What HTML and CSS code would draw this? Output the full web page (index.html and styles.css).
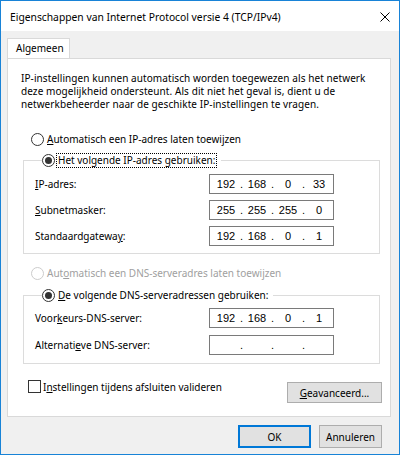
FILE: index.html
```html
<!DOCTYPE html>
<html lang="nl">
<head>
    <meta charset="UTF-8">
    <title>Eigenschappen van Internet Protocol versie 4 (TCP/IPv4)</title>
    <link rel="stylesheet" href="styles.css">
</head>
<body>
    <div class="window">
        <div class="titlebar">
            <span class="title">Eigenschappen van Internet Protocol versie 4 (TCP/IPv4)</span>
            <svg class="close" width="10" height="10" viewBox="0 0 10 10">
                <path d="M0.5 0.5 L9.5 9.5 M9.5 0.5 L0.5 9.5" stroke="#000" stroke-width="1" fill="none"/>
            </svg>
        </div>

        <div class="content">
            <div class="tabs">
                <div class="tab active">Algemeen</div>
            </div>
            <div class="panel">
                <p class="intro">
                    IP-instellingen kunnen automatisch worden toegewezen als het netwerk<br>
                    deze mogelijkheid ondersteunt. Als dit niet het geval is, dient u de<br>
                    netwerkbeheerder naar de geschikte IP-instellingen te vragen.
                </p>

                <div class="radio-row first">
                    <span class="radio"></span>
                    <span class="radio-text"><u>A</u>utomatisch een IP-adres laten toewijzen</span>
                </div>

                <fieldset class="group ip-group">
                    <legend>
                        <span class="radio checked"></span>
                        <span class="radio-text focus">Het volgende IP-adres gebruiken:</span>
                    </legend>
                    <div class="rows">
                        <span class="label"><u>I</u>P-adres:</span>
                        <div class="ipbox">
                            <span class="oct">192</span><span class="dot">.</span><span class="oct">168</span><span class="dot">.</span><span class="oct">0</span><span class="dot">.</span><span class="oct">33</span>
                        </div>
                        <span class="label"><u>S</u>ubnetmasker:</span>
                        <div class="ipbox">
                            <span class="oct">255</span><span class="dot">.</span><span class="oct">255</span><span class="dot">.</span><span class="oct">255</span><span class="dot">.</span><span class="oct">0</span>
                        </div>
                        <span class="label">Standaardgatewa<u>y</u>:</span>
                        <div class="ipbox">
                            <span class="oct">192</span><span class="dot">.</span><span class="oct">168</span><span class="dot">.</span><span class="oct">0</span><span class="dot">.</span><span class="oct">1</span>
                        </div>
                    </div>
                </fieldset>

                <div class="radio-row disabled">
                    <span class="radio"></span>
                    <span class="radio-text">Aut<u>o</u>matisch een DNS-serveradres laten toewijzen</span>
                </div>

                <fieldset class="group dns-group">
                    <legend>
                        <span class="radio checked"></span>
                        <span class="radio-text"><u>D</u>e volgende DNS-serveradressen gebruiken:</span>
                    </legend>
                    <div class="rows">
                        <span class="label">Voor<u>k</u>eurs-DNS-server:</span>
                        <div class="ipbox">
                            <span class="oct">192</span><span class="dot">.</span><span class="oct">168</span><span class="dot">.</span><span class="oct">0</span><span class="dot">.</span><span class="oct">1</span>
                        </div>
                        <span class="label">Alternati<u>e</u>ve DNS-server:</span>
                        <div class="ipbox">
                            <span class="oct"></span><span class="dot">.</span><span class="oct"></span><span class="dot">.</span><span class="oct"></span><span class="dot">.</span><span class="oct"></span>
                        </div>
                    </div>
                </fieldset>

                <div class="bottom-row">
                    <label class="check-row">
                        <span class="checkbox"></span>
                        <span>I<u>n</u>stellingen tijdens afsluiten valideren</span>
                    </label>
                    <button class="btn advanced"><u>G</u>eavanceerd...</button>
                </div>
            </div>

            <div class="dialog-buttons">
                <button class="btn ok">OK</button>
                <button class="btn cancel">Annuleren</button>
            </div>
        </div>
    </div>
</body>
</html>
```

FILE: styles.css
```css
body {
    margin: 0;
    font-family: "Segoe UI", "Noto Sans", sans-serif;
    font-size: 10px;
    color: #000;
    background-color: #f0f0f0;
}

.window {
    width: 400px;
    height: 455px;
    box-sizing: border-box;
    border: 1px solid #1883d7;
    background-color: #f0f0f0;
    overflow: hidden;
}

.titlebar {
    height: 30px;
    background-color: #fff;
    display: flex;
    align-items: center;
    justify-content: space-between;
    padding: 0 9px 0 9px;
}

.title {
    font-size: 10.3px;
    line-height: 30px;
    padding-top: 1px;
}

.close {
    display: block;
    margin-top: 1px;
}

.content {
    padding: 7px 0 0 6px;
}

.tabs {
    display: flex;
    height: 20px;
}

.tab {
    width: 63px;
    height: 20px;
    border: 1px solid #d9d9d9;
    border-bottom: none;
    background-color: #fff;
    padding-left: 8px;
    box-sizing: border-box;
    line-height: 19px;
    position: relative;
    z-index: 1;
}

.panel {
    width: 384px;
    height: 359px;
    box-sizing: border-box;
    border: 1px solid #d9d9d9;
    background-color: #fff;
}

.intro {
    margin: 13px 0 0 13px;
    line-height: 13px;
    white-space: nowrap;
    letter-spacing: 0.08px;
}

.radio-row {
    display: flex;
    align-items: center;
    height: 13px;
    margin: 13px 0 0 23px;
}

.radio-row.first {
    margin-top: 22px;
}

.radio {
    width: 13px;
    height: 13px;
    box-sizing: border-box;
    border: 1px solid #333;
    border-radius: 50%;
    background-color: #fff;
    display: flex;
    align-items: center;
    justify-content: center;
    flex: none;
}

.radio.checked::after {
    content: "";
    width: 7px;
    height: 7px;
    border-radius: 50%;
    background-color: #333;
}

.radio-text {
    margin-left: 3px;
    line-height: 13px;
    white-space: nowrap;
}

.radio-text.focus {
    margin-left: 2px;
    padding: 0 1px;
    outline: 1px dotted #000;
    outline-offset: 0;
}

.disabled .radio {
    border-color: #ccc;
}

.disabled .radio-text {
    color: #a0a0a0;
}

.group {
    margin: 7px 10px 0 15px;
    padding: 7px 0 7px 11px;
    border: 1px solid #dcdcdc;
    min-width: 0;
}

.group legend {
    display: flex;
    align-items: center;
    height: 14px;
    margin-left: 7px;
    padding: 0 5px 0 0;
}

.dns-group {
    margin-top: 8px;
    padding-top: 6px;
    padding-bottom: 8px;
}

.rows {
    display: grid;
    grid-template-columns: 174px 125px;
    row-gap: 6px;
    align-items: center;
}

.dns-group .rows {
    row-gap: 7px;
}

.label {
    line-height: 20px;
}

.ipbox {
    height: 20px;
    box-sizing: border-box;
    border: 1px solid #7a7a7a;
    background-color: #fff;
    display: flex;
    align-items: center;
    padding-left: 4px;
    font-family: "Liberation Sans", Arial, sans-serif;
    font-size: 11px;
}

.oct {
    width: 24px;
    text-align: center;
}

.dot {
    width: 7px;
    text-align: center;
}

.bottom-row {
    display: flex;
    justify-content: space-between;
    align-items: flex-start;
    margin: 16px 8px 0 20px;
}

.check-row {
    display: flex;
    align-items: center;
    height: 13px;
}

.checkbox {
    width: 13px;
    height: 13px;
    box-sizing: border-box;
    border: 1px solid #333;
    background-color: #fff;
    margin-right: 2px;
    flex: none;
}

.btn {
    font-family: inherit;
    font-size: 10px;
    color: #000;
    background-color: #e1e1e1;
    border: 1px solid #adadad;
    border-radius: 0;
    padding: 0;
    height: 21px;
    box-sizing: border-box;
}

.advanced {
    width: 95px;
    margin-top: 2px;
}

.dialog-buttons {
    display: flex;
    justify-content: flex-end;
    gap: 8px;
    margin: 8px 17px 0 0;
}

.dialog-buttons .btn {
    height: 23px;
}

.ok {
    width: 73px;
    border: 2px solid #0078d7;
}

.cancel {
    width: 63px;
}
```
